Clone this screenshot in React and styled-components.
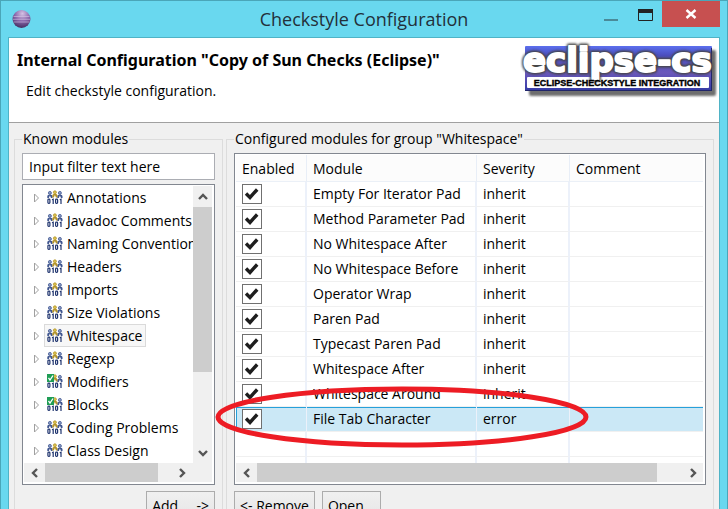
import React, { useState } from 'react';
import styled, { createGlobalStyle } from 'styled-components';

const GlobalStyle = createGlobalStyle`
  *, *::before, *::after { box-sizing: border-box; }
  html, body { height: 100%; margin: 0; overflow: hidden; }
  body, button, input {
    font-family: "Open Sans", "Noto Sans", sans-serif;
    font-size: 14px;
    line-height: 20px;
    color: #000;
  }
  #root { height: 100%; }
`;

const Window = styled.div`
  display: flex;
  flex-direction: column;
  min-height: 100vh;
  background: #69d8ef;
  border: 1px solid #4aa6b9;
  border-bottom: 0;
  padding: 0 7px;
`;

const TitleBar = styled.header`
  display: grid;
  grid-template-columns: 150px 1fr 150px;
  align-items: start;
  height: 36px;
`;

const AppIcon = styled.svg`
  display: block;
  width: 20px;
  height: 20px;
  margin: 7px 0 0 3px;
`;

const Title = styled.h1`
  margin: 0;
  font-size: 18px;
  font-weight: 400;
  line-height: 36px;
  text-align: center;
  color: #23303a;
`;

const WindowControls = styled.div`
  display: flex;
  justify-content: flex-end;
`;

const ControlButton = styled.button`
  width: ${(p) => (p.$close ? 58 : 34)}px;
  height: 26px;
  padding: 0;
  border: 0;
  background: ${(p) => (p.$close ? '#c75050' : 'transparent')};

  svg { display: block; margin: 0 auto; }
`;

const Content = styled.main`
  flex: 1;
  display: flex;
  flex-direction: column;
  background: #f0f0f0;
  border: 1px solid #4fb3c6;
  border-bottom: 0;
`;

const Banner = styled.section`
  display: flex;
  justify-content: space-between;
  height: 85px;
  background: #fff;
  border-bottom: 1px solid #a0a0a0;
`;

const BannerText = styled.div`
  padding: 11px 0 0 8px;
`;

const BannerTitle = styled.h2`
  margin: 0;
  font-family: "Noto Sans", "Open Sans", sans-serif;
  font-size: 16px;
  font-weight: 700;
  line-height: 22px;
  white-space: nowrap;
`;

const BannerMessage = styled.p`
  margin: 10px 0 0 9px;
`;

const Logo = styled.svg`
  flex: none;
  width: 200px;
  height: 64px;
`;

const Panels = styled.div`
  flex: 1;
  display: flex;
  gap: 3px;
  padding: 6px 5px 0;
`;

const Group = styled.fieldset`
  position: relative;
  flex: ${(p) => (p.$grow ? '1 1 0' : '0 0 209px')};
  min-width: 0;
  margin: 0;
  padding: 4px 7px 0;
  border: 1px solid #dcdcdc;
`;

const Legend = styled.legend`
  padding: 0 1px;
  white-space: nowrap;
`;

const FilterInput = styled.input`
  display: block;
  width: 100%;
  height: 27px;
  margin-bottom: 4px;
  padding: 0 6px;
  border: 1px solid #abadb3;
  border-radius: 0;
  background: #fff;
  outline: none;
`;

const ListFrame = styled.div`
  display: flex;
  flex-direction: column;
  height: ${(p) => (p.$tall ? 332 : 301)}px;
  padding: 1px 2px 2px 1px;
  background: #fff;
  border: 1px solid #828790;
`;

const ListBody = styled.div`
  flex: 1;
  display: flex;
  min-height: 0;
`;

const Tree = styled.ul`
  flex: 1;
  min-width: 0;
  margin: 0;
  padding: 0;
  list-style: none;
  overflow: hidden;
`;

const TreeItem = styled.li`
  display: flex;
  align-items: center;
  height: 23px;
  padding-left: 9px;
  white-space: nowrap;
`;

const Expander = styled.svg`
  flex: none;
  width: 7px;
  height: 10px;
  margin-right: 4px;
`;

const TreeLabel = styled.span`
  display: flex;
  align-items: center;
  gap: 4px;
  height: 23px;
  padding: 0 3px 0 2px;
  border: 1px solid ${(p) => (p.$selected ? '#dadada' : 'transparent')};
  background: ${(p) => (p.$selected ? '#f7f7f7' : 'transparent')};
`;

const ModuleIcon = styled.svg`
  flex: none;
  width: 16px;
  height: 16px;
`;

const ScrollBar = styled.div`
  flex: none;
  display: flex;
  flex-direction: ${(p) => (p.$vertical ? 'column' : 'row')};
  ${(p) => (p.$vertical ? 'width: 19px;' : 'height: 19px;')}
  background: #f0f0f0;
`;

const ScrollButton = styled.button`
  flex: none;
  display: flex;
  align-items: center;
  justify-content: center;
  width: ${(p) => (p.$wide ? 21 : 19)}px;
  height: ${(p) => (p.$tall ? 21 : 19)}px;
  padding: 0;
  border: 0;
  background: transparent;
`;

const ScrollTrack = styled.div`
  flex: 1;
  display: flex;
  flex-direction: ${(p) => (p.$vertical ? 'column' : 'row')};
`;

const ScrollThumb = styled.div`
  flex: 0 0 ${(p) => p.$size};
  background: #cdcdcd;
`;

const ScrollCorner = styled.div`
  flex: none;
  width: 20px;
  height: 19px;
  background: #f0f0f0;
`;

const ScrollRow = styled.div`
  display: flex;

  ${ScrollBar} { flex: 1; }
`;

const ModuleTable = styled.table`
  width: 100%;
  height: 100%;
  border-collapse: separate;
  border-spacing: 0;
  table-layout: fixed;
`;

const HeaderCell = styled.th`
  width: ${(p) => p.$width || 'auto'};
  height: 27px;
  padding: 1px 0 0 6px;
  font-weight: 400;
  text-align: left;
  background: #fcfcfc;
  border-right: 1px solid #e8eef7;
  border-bottom: 1px solid #ebf0f7;
  &:last-child { border-right: 0; }
`;

const Cell = styled.td`
  height: 25px;
  padding: 0 0 0 6px;
  white-space: nowrap;
  border-right: 2px solid #ecf1fa;
  border-bottom: 1px solid #f0f0f0;
  &:last-child { border-right: 0; }
`;

const Row = styled.tr`
  ${(p) => p.$selected && `
    ${Cell} {
      background: #cbe8f6;
      box-shadow: inset 0 1px #26a0da;
      border-right-width: 1px;
    }
    ${Cell}:first-child { box-shadow: inset 1px 1px #26a0da; }
  `}
`;

const FillerRow = styled.tr`
  ${Cell} { height: auto; border-bottom: 0; }
`;

const CheckLabel = styled.label`
  display: grid;
  width: 20px;
  height: 20px;

  > * { grid-area: 1 / 1; }
  svg { pointer-events: none; visibility: hidden; }
  input:checked + svg { visibility: visible; }
`;

const CheckBox = styled.input`
  appearance: none;
  width: 20px;
  height: 20px;
  margin: 0;
  border: 1px solid #707070;
  background: #fff;
`;

const ButtonRow = styled.div`
  display: flex;
  gap: 7px;
  justify-content: ${(p) => (p.$end ? 'flex-end' : 'flex-start')};
  padding: 6px 0 8px;
`;

const PushButton = styled.button`
  height: 30px;
  padding: 0 5px;
  border: 1px solid #acacac;
  background: linear-gradient(#f0f0f0, #e5e5e5);
  white-space: pre;
`;

const Highlight = styled.svg`
  position: absolute;
  left: -13px;
  top: 236px;
  width: 375px;
  height: 64px;
  overflow: visible;
  pointer-events: none;
`;

const CATEGORIES = [
  { name: 'Annotations' },
  { name: 'Javadoc Comments' },
  { name: 'Naming Conventions' },
  { name: 'Headers' },
  { name: 'Imports' },
  { name: 'Size Violations' },
  { name: 'Whitespace', selected: true },
  { name: 'Regexp' },
  { name: 'Modifiers', complete: true },
  { name: 'Blocks', complete: true },
  { name: 'Coding Problems' },
  { name: 'Class Design' },
];

const MODULES = [
  ['Empty For Iterator Pad', 'inherit'],
  ['Method Parameter Pad', 'inherit'],
  ['No Whitespace After', 'inherit'],
  ['No Whitespace Before', 'inherit'],
  ['Operator Wrap', 'inherit'],
  ['Paren Pad', 'inherit'],
  ['Typecast Paren Pad', 'inherit'],
  ['Whitespace After', 'inherit'],
  ['Whitespace Around', 'inherit'],
  ['File Tab Character', 'error', true],
];

const ARROWS = {
  up: 'M2 8 L6 4 L10 8',
  down: 'M2 4 L6 8 L10 4',
  left: 'M8 2 L4 6 L8 10',
  right: 'M4 2 L8 6 L4 10',
};

function Arrow({ direction, ...rest }) {
  return (
    <ScrollButton type="button" aria-label={`Scroll ${direction}`} {...rest}>
      <svg width="12" height="12" viewBox="0 0 12 12" aria-hidden="true">
        <path d={ARROWS[direction]} fill="none" stroke="#555" strokeWidth="2.4" />
      </svg>
    </ScrollButton>
  );
}

function Person({ x, y, color, skin }) {
  return (
    <g transform={`translate(${x} ${y})`}>
      <path d="M0 7 V5 Q0 3.4 2.6 3.4 Q5.2 3.4 5.2 5 V7 H3.7 L2.6 4.6 L1.5 7 Z" fill={color} />
      <circle cx="2.6" cy="1.9" r="1.5" fill={skin} stroke={color} strokeWidth="0.8" />
    </g>
  );
}

function CategoryIcon({ complete }) {
  return (
    <ModuleIcon viewBox="0 0 16 16" aria-hidden="true">
      <Person x={0.3} y={1} color="#40568f" skin="#8c9fc8" />
      <Person x={10.3} y={1} color="#40568f" skin="#8c9fc8" />
      <Person x={5.3} y={0.4} color="#b3942c" skin="#ddc34c" />
      <g fill="none" stroke="#20356f" strokeWidth="1.2">
        <rect x="0.9" y="9.2" width="2" height="4.2" rx="0.8" />
        <path d="M5 9.8 L6.2 9.2 V14" />
        <rect x="8.6" y="9.2" width="2" height="4.2" rx="0.8" />
        <path d="M12.8 9.8 L14 9.2 V14" />
      </g>
      {complete && (
        <g>
          <rect x="0" y="0" width="7" height="8" fill="#1f9d55" />
          <path d="M1.5 3.8 L3 6 L6 1.5" fill="none" stroke="#fff" strokeWidth="1.3" />
        </g>
      )}
    </ModuleIcon>
  );
}

function EclipseIcon() {
  return (
    <AppIcon viewBox="0 0 20 20" aria-hidden="true">
      <defs>
        <radialGradient id="orb" cx="0.55" cy="0.2" r="0.85">
          <stop offset="0" stopColor="#d5c2e4" />
          <stop offset="0.5" stopColor="#8866aa" />
          <stop offset="1" stopColor="#3c2858" />
        </radialGradient>
      </defs>
      <circle cx="10.5" cy="11" r="9" fill="url(#orb)" />
      <path d="M2.5 8.5 H18.5 M2 11.3 H19 M2.5 14 H18.5" stroke="#d9cae8" strokeWidth="0.8" opacity="0.7" />
    </AppIcon>
  );
}

function ProductLogo() {
  const word = {
    x: 4,
    y: 34,
    fontFamily: '"DejaVu Sans", sans-serif',
    fontWeight: 700,
    fontSize: 34,
    strokeLinejoin: 'round',
  };
  return (
    <Logo viewBox="0 0 200 64" role="img" aria-label="eclipse-cs, Eclipse-Checkstyle Integration">
      <defs>
        <linearGradient id="plate" x1="0" y1="0" x2="0" y2="1">
          <stop offset="0" stopColor="#5c6fee" />
          <stop offset="0.2" stopColor="#4b4fc0" />
          <stop offset="0.6" stopColor="#6a58bb" />
          <stop offset="1" stopColor="#333aa5" />
        </linearGradient>
        <filter id="soft" x="-10%" y="-10%" width="120%" height="130%">
          <feGaussianBlur stdDeviation="1" />
        </filter>
      </defs>
      <rect x="10" y="12" width="187" height="46" rx="2" fill="#555" opacity="0.85" filter="url(#soft)" />
      <rect x="6" y="8" width="187" height="45" rx="1" fill="url(#plate)" />
      <path d="M6 52.5 H193 M192.5 10 V53" stroke="#20256a" />
      <rect x="8" y="39" width="182" height="11" rx="1" fill="#fff" />
      <g filter="url(#soft)">
        <text {...word} fill="#444" stroke="#444" strokeWidth="5">eclipse-cs</text>
      </g>
      <text {...word} fill="#fff" stroke="#fff" strokeWidth="2">eclipse-cs</text>
      <text
        x="98"
        y="48"
        textAnchor="middle"
        fontFamily='"Liberation Sans Narrow", "Liberation Sans", sans-serif'
        fontWeight="700"
        fontSize="9"
        fill="#000"
        stroke="#000"
        strokeWidth="0.4"
      >
        ECLIPSE-CHECKSTYLE INTEGRATION
      </text>
    </Logo>
  );
}

function ModuleRow({ name, severity, selected }) {
  const [enabled, setEnabled] = useState(true);
  return (
    <Row $selected={selected}>
      <Cell>
        <CheckLabel>
          <CheckBox
            type="checkbox"
            aria-label={`Enable ${name}`}
            checked={enabled}
            onChange={(e) => setEnabled(e.target.checked)}
          />
          <svg width="20" height="20" viewBox="0 0 20 20" aria-hidden="true">
            <path d="M4 9.5 L8 13.5 L15.2 5.5" fill="none" stroke="#1e1e1e" strokeWidth="3.4" />
          </svg>
        </CheckLabel>
      </Cell>
      <Cell>{name}</Cell>
      <Cell>{severity}</Cell>
      <Cell />
    </Row>
  );
}

export default function App() {
  const [filter, setFilter] = useState('Input filter text here');
  return (
    <>
      <GlobalStyle />
      <Window>
        <TitleBar>
          <EclipseIcon />
          <Title>Checkstyle Configuration</Title>
          <WindowControls>
            <ControlButton type="button" aria-label="Minimize">
              <svg width="14" height="20" viewBox="0 0 14 20"><path d="M0 16 H14" stroke="#4a8a99" strokeWidth="2" /></svg>
            </ControlButton>
            <ControlButton type="button" aria-label="Maximize">
              <svg width="15" height="20" viewBox="0 0 15 20">
                <path d="M0.5 5 V16.5 H14.5 V5" fill="none" stroke="#222" />
                <rect y="5" width="15" height="4" fill="#222" />
              </svg>
            </ControlButton>
            <ControlButton type="button" aria-label="Close" $close>
              <svg width="12" height="12" viewBox="0 0 12 12"><path d="M1.5 2 L10.5 10 M10.5 2 L1.5 10" stroke="#fff" strokeWidth="2.4" /></svg>
            </ControlButton>
          </WindowControls>
        </TitleBar>
        <Content>
          <Banner>
            <BannerText>
              <BannerTitle>Internal Configuration "Copy of Sun Checks (Eclipse)"</BannerTitle>
              <BannerMessage>Edit checkstyle configuration.</BannerMessage>
            </BannerText>
            <ProductLogo />
          </Banner>
          <Panels>
            <Group>
              <Legend>Known modules</Legend>
              <FilterInput
                aria-label="Filter modules"
                value={filter}
                onChange={(e) => setFilter(e.target.value)}
              />
              <ListFrame>
                <ListBody>
                  <Tree>
                    {CATEGORIES.map((c) => (
                      <TreeItem key={c.name}>
                        <Expander viewBox="0 0 7 10" aria-hidden="true">
                          <path d="M1.5 1 L5.5 5 L1.5 9 Z" fill="#fff" stroke="#a0a0a0" />
                        </Expander>
                        <TreeLabel $selected={c.selected}>
                          <CategoryIcon complete={c.complete} />
                          {c.name}
                        </TreeLabel>
                      </TreeItem>
                    ))}
                  </Tree>
                  <ScrollBar $vertical>
                    <Arrow direction="up" $tall />
                    <ScrollTrack $vertical><ScrollThumb $size="70%" /></ScrollTrack>
                    <Arrow direction="down" $tall />
                  </ScrollBar>
                </ListBody>
                <ScrollRow>
                  <ScrollBar>
                    <Arrow direction="left" $wide />
                    <ScrollTrack><ScrollThumb $size="90%" /></ScrollTrack>
                    <Arrow direction="right" $wide />
                  </ScrollBar>
                  <ScrollCorner />
                </ScrollRow>
              </ListFrame>
              <ButtonRow $end>
                <PushButton type="button">{'Add...  ->'}</PushButton>
              </ButtonRow>
            </Group>
            <Group $grow>
              <Legend>Configured modules for group "Whitespace"</Legend>
              <ListFrame $tall>
                <ListBody>
                  <ModuleTable>
                    <thead>
                      <tr>
                        <HeaderCell $width="71px">Enabled</HeaderCell>
                        <HeaderCell $width="170px">Module</HeaderCell>
                        <HeaderCell $width="93px">Severity</HeaderCell>
                        <HeaderCell>Comment</HeaderCell>
                      </tr>
                    </thead>
                    <tbody>
                      {MODULES.map(([name, severity, selected]) => (
                        <ModuleRow key={name} name={name} severity={severity} selected={selected} />
                      ))}
                      <tr><Cell /><Cell /><Cell /><Cell /></tr>
                      <FillerRow><Cell /><Cell /><Cell /><Cell /></FillerRow>
                    </tbody>
                  </ModuleTable>
                </ListBody>
                <ScrollBar>
                  <Arrow direction="left" $wide />
                  <ScrollTrack><ScrollThumb $size="94%" /></ScrollTrack>
                  <Arrow direction="right" $wide />
                </ScrollBar>
              </ListFrame>
              <ButtonRow>
                <PushButton type="button">{'<- Remove'}</PushButton>
                <PushButton type="button">Open...</PushButton>
              </ButtonRow>
              <Highlight viewBox="0 0 375 64" aria-hidden="true">
                <ellipse cx="188" cy="32" rx="184" ry="28" fill="none" stroke="#ed1c24" strokeWidth="5" />
              </Highlight>
            </Group>
          </Panels>
        </Content>
      </Window>
    </>
  );
}
